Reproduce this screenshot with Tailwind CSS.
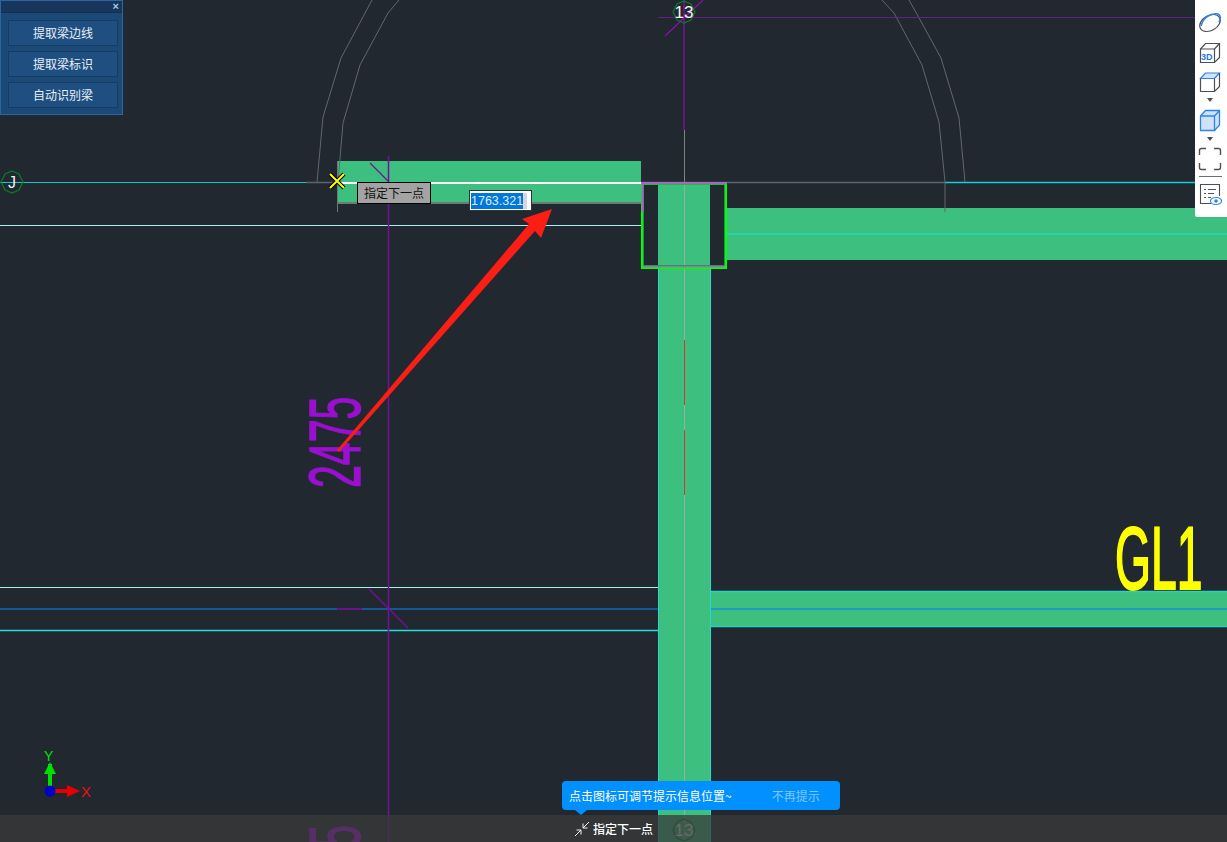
<!DOCTYPE html>
<html lang="zh-CN">
<head>
    <meta charset="UTF-8">
    <meta name="viewport" content="width=device-width, initial-scale=1.0">
    <title>提取梁边线</title>
    <script src="https://cdn.jsdelivr.net/npm/@tailwindcss/browser@4"></script>
</head>
<body class="bg-[#212830] font-['Liberation_Sans','Noto_Sans_CJK_SC',sans-serif] overflow-hidden">
<div class="relative w-[1227px] h-[842px] overflow-hidden">

    <!-- cad canvas -->
    <svg class="absolute inset-0" width="1227" height="842" viewBox="0 0 1227 842" fill="none">
        <!-- beams -->
        <rect x="338" y="161" width="303" height="42" fill="#3dc07f"/>
        <rect x="727" y="208" width="500" height="52" fill="#3dc07f"/>
        <rect x="710" y="591" width="517" height="36" fill="#3dc07f"/>
        <rect x="658" y="183" width="52" height="659" fill="#3dc07f"/>

        <!-- grid lines -->
        <path d="M0 225.500H641" stroke="#a8eeee"/>
        <path d="M0 587.500H658" stroke="#a8eeee"/>
        <path d="M0 630.500H658" stroke="#22e0e0" stroke-width="1.500"/>
        <path d="M0 609H658" stroke="#14569a" stroke-width="2"/>
        <path d="M710 609H1227" stroke="#1e9ac6" stroke-width="2"/>
        <path d="M337 609H362" stroke="#6a1190" stroke-width="2"/>
        <path d="M710 591.500H1227M710 626.500H1227" stroke="#25d3c0" stroke-width="1.300"/>
        <path d="M727 234H1227" stroke="#25d8b8" stroke-width="1.500"/>
        <path d="M0 182.500H306" stroke="#12c8d2" stroke-width="1"/>
        <path d="M306 182.500H337M641 182.500H945" stroke="#5f6468" stroke-width="1.500"/>
        <path d="M945 182.500H1227" stroke="#12d0da" stroke-width="1.500"/>
        <path d="M337 183H641" stroke="#ffffff" stroke-width="2"/>
        <path d="M337.500 161V212" stroke="#6d7a74"/>
        <path d="M338 203H641" stroke="#6b7b74" stroke-width="2"/>

        <!-- arcs -->
        <path d="M372 0L341 58L323 117L317 182" stroke="#62676b"/>
        <path d="M399 0L388 13L360 65L343 123L338 182" stroke="#62676b"/>
        <path d="M909 0L918 16L941 58L959 118L965 182" stroke="#62676b"/>
        <path d="M882 0L894 13L922 65L939 122L945 182V212" stroke="#62676b"/>

        <!-- axis marks -->
        <path d="M658 17.500H1195" stroke="#6a1b8a"/>
        <path d="M388.500 156V842" stroke="#76109c" stroke-width="1.500"/>
        <path d="M370 163L388 181M369 589L408 628" stroke="#76109c" stroke-width="1.200"/>
        <path d="M684 0V130M665 36L703 0" stroke="#8a12a8" stroke-width="1.200"/>
        <path d="M684.500 130V183" stroke="#7d8285"/>
        <path d="M684.500 183V842" stroke="#8fb3a0"/>
        <path d="M684.500 340V405M684.500 430V495" stroke="#e0352b"/>
        <path d="M658.500 268V842M710.500 268V842" stroke="#20dcd0"/>

        <!-- column box -->
        <rect x="644" y="185" width="14" height="81" fill="#212830"/>
        <rect x="710" y="185" width="14" height="81" fill="#212830"/>
        <rect x="643.500" y="184.500" width="81" height="81" stroke="#2f8a50"/>
        <rect x="642" y="183.500" width="84" height="84.500" stroke="#00ff00" stroke-width="2"/>
        <path d="M641 183H727M642.500 183V212" stroke="#a865c9" stroke-width="2"/>
        <path d="M643 266.500H725" stroke="#a865c9" stroke-width="1.500"/>

        <!-- grid bubbles -->
        <polygon points="12,171 19,174 23,182 19,190 12,193 5,190 1,182 5,174" stroke="#0d7a2e" stroke-width="1.200"/>
        <text x="12" y="188" text-anchor="middle" font-size="16" fill="#f2f2f2" font-family="Liberation Sans">J</text>
        <polygon points="684,1 691,4 695,12 691,20 684,23 677,20 673,12 677,4" stroke="#0d7a2e" stroke-width="1.200"/>
        <text x="684" y="18" text-anchor="middle" font-size="17" fill="#f2f2f2" font-family="Liberation Sans">13</text>
        <polygon points="684,819 691,822 695,830 691,838 684,841 677,838 673,830 677,822" stroke="#0d7a2e" stroke-width="1.200"/>
        <text x="684" y="836" text-anchor="middle" font-size="17" fill="#f2f2f2" font-family="Liberation Sans">13</text>

        <!-- dimension + label text -->
        <text transform="translate(360 488) rotate(-90) scale(0.57 1)" font-size="72" fill="#9a0fd0" stroke="#9a0fd0" stroke-width="1.500" font-family="Liberation Sans">2475</text>
        <text transform="translate(360 848) rotate(-90) scale(0.57 1)" font-size="72" fill="#b010f0" stroke="#b010f0" stroke-width="1.500" font-family="Liberation Sans">5</text>
        <text transform="translate(1115 589) scale(0.52 1)" font-size="89" fill="#ffff00" stroke="#ffff00" stroke-width="2" font-family="Liberation Sans">GL1</text>

        <!-- red arrow -->
        <polygon points="337,450 529,224 522,219 552,209 541,238 535,231 339,452" fill="#fa1e14"/>

        <!-- cursor -->
        <path d="M330 174L344 188M344 174L330 188" stroke="#000000" stroke-width="4"/>
        <path d="M330 174L344 188M344 174L330 188" stroke="#ffff00" stroke-width="2"/>

        <!-- ucs -->
        <path d="M50 790V764" stroke="#00e000" stroke-width="4"/>
        <polygon points="50,762 44,774 56,774" fill="#00e000"/>
        <path d="M50 791H72" stroke="#e80000" stroke-width="4"/>
        <polygon points="80,791 67,785 67,797" fill="#e80000"/>
        <circle cx="50" cy="791" r="5.500" fill="#0000c8"/>
        <text x="44" y="761" font-size="14" fill="#00e000" font-family="Liberation Sans">Y</text>
        <text x="81" y="797" font-size="15" fill="#e81010" font-family="Liberation Sans">X</text>
    </svg>

    <!-- beam tools panel -->
    <div class="absolute left-0 top-0 w-[123px] h-[115px] bg-[#1b4a78] border border-[#2a66a0] flex flex-col">
        <div class="h-[12px] bg-[#17375a] border-b border-[#12304e] flex items-center justify-end pr-[3px]">
            <span class="text-[#a9c8e8] text-[11px] font-bold leading-none">×</span>
        </div>
        <div class="flex flex-col gap-[5px] pt-[7px] pl-[7px]">
            <button class="w-[110px] h-[26px] bg-[#1f4f80] border border-[#173c60] text-[#e8f0f8] text-[12px] font-['Noto_Sans_CJK_SC',sans-serif]">提取梁边线</button>
            <button class="w-[110px] h-[26px] bg-[#1f4f80] border border-[#173c60] text-[#e8f0f8] text-[12px] font-['Noto_Sans_CJK_SC',sans-serif]">提取梁标识</button>
            <button class="w-[110px] h-[26px] bg-[#1f4f80] border border-[#173c60] text-[#e8f0f8] text-[12px] font-['Noto_Sans_CJK_SC',sans-serif]">自动识别梁</button>
        </div>
    </div>

    <!-- view toolbar -->
    <div class="absolute right-0 top-0 w-[32px] h-[217px] bg-white rounded-bl-[2px] flex flex-col items-center pt-[12px] pr-[2px]">
        <svg width="24" height="22" viewBox="0 0 24 22" fill="none">
            <ellipse cx="12" cy="11" rx="11" ry="7.500" transform="rotate(-30 12 11)" stroke="#4a5058" stroke-width="1.200"/>
            <path d="M3 14C5 6 12 1 20 2C23 3 23 7 21 10" stroke="#2b84ea" stroke-width="1.500"/>
        </svg>
        <svg class="mt-[8px]" width="22" height="22" viewBox="0 0 22 22" fill="none">
            <path d="M1.500 7L6.500 1.500H20.500V15.500L15.500 20.500H1.500ZM1.500 7H15.500V20.500M15.500 7L20.500 1.500" stroke="#4a5058" stroke-width="1.200"/>
            <text x="2" y="18" font-size="9" font-weight="700" fill="#1e78e0" font-family="Liberation Sans">3D</text>
        </svg>
        <svg class="mt-[7px]" width="22" height="22" viewBox="0 0 22 22" fill="none">
            <path d="M1.500 7.500L6.500 2H20.500L15.500 7.500Z" fill="#cfe2fa" stroke="#2b84ea" stroke-width="1.200"/>
            <path d="M1.500 7.500V20.500H15.500L20.500 15.500V2M15.500 7.500V20.500" stroke="#4a5058" stroke-width="1.200"/>
        </svg>
        <div class="mt-[5px] w-0 h-0 border-x-[3.500px] border-x-transparent border-t-[4px] border-t-[#4a5058]"></div>
        <svg class="mt-[6px]" width="22" height="24" viewBox="0 0 22 24" fill="none">
            <path d="M1.500 8L6.500 2.500H20.500V17L15.500 22.500H1.500Z" fill="#cfe2fa" stroke="#2b84ea" stroke-width="1.300"/>
            <path d="M1.500 8H15.500V22.500M15.500 8L20.500 2.500" stroke="#2b84ea" stroke-width="1.300"/>
        </svg>
        <div class="mt-[5px] w-0 h-0 border-x-[3.500px] border-x-transparent border-t-[4px] border-t-[#4a5058]"></div>
        <svg class="mt-[6px]" width="24" height="24" viewBox="0 0 24 24" fill="none">
            <path d="M1.500 8V3.500Q1.500 1.500 3.500 1.500H8M16 1.500H20.500Q22.500 1.500 22.500 3.500V8M22.500 16V20.500Q22.500 22.500 20.500 22.500H16M8 22.500H3.500Q1.500 22.500 1.500 20.500V16" stroke="#4a5058" stroke-width="1.400"/>
        </svg>
        <div class="mt-[5px] w-[23px] h-px bg-[#6a6f75]"></div>
        <svg class="mt-[6px]" width="23" height="23" viewBox="0 0 23 23" fill="none">
            <path d="M12 20.500H1.500V1.500H20.500V13" stroke="#4a5058" stroke-width="1.100"/>
            <path d="M5 6.500H7M9 6.500H17M5 10.500H7M9 10.500H15M5 14.500H7M9 14.500H12" stroke="#4a5058"/>
            <ellipse cx="17" cy="18" rx="5.500" ry="3.500" stroke="#2b84ea" stroke-width="1.200"/>
            <circle cx="17" cy="18" r="1.800" fill="#2b84ea"/>
        </svg>
    </div>

    <!-- cursor prompt -->
    <div class="absolute left-[357px] top-[182px] w-[74px] h-[22px] bg-[#a3a3a3] border border-black flex items-center justify-center text-[#111] text-[12px] font-['Noto_Sans_CJK_SC',sans-serif]">指定下一点</div>

    <!-- dynamic input -->
    <div class="absolute left-[469px] top-[190px] w-[63px] h-[21px] bg-white border border-black/80 flex items-center pl-px">
        <span class="bg-[#0078d7] text-[#dcecff] text-[12.500px] leading-[16px] font-['Liberation_Sans',sans-serif]">1763.321</span>
        <span class="w-[4px] h-[16px] bg-[#d4d8dc]"></span>
    </div>

    <!-- bottom prompt -->
    <div class="absolute left-0 bottom-0 w-full h-[27px] bg-[#3a3a3a]/75 flex items-center pl-[574px]">
        <svg width="16" height="16" viewBox="0 0 16 16" fill="none" stroke="#f2f2f2" stroke-width="1">
            <path d="M15 1L9 7M9 2.500V7H13.500M1 15L7 9M2.500 9H7V13.500"/>
        </svg>
        <span class="ml-[3px] text-white text-[12px] font-medium font-['Noto_Sans_CJK_SC',sans-serif]">指定下一点</span>
    </div>

    <!-- hint bubble -->
    <div class="absolute left-[562px] top-[781px] w-[278px] h-[29px] bg-[#0090ff] rounded-[4px] flex items-center pl-[7px] text-[12px] font-['Noto_Sans_CJK_SC',sans-serif]">
        <span class="text-white">点击图标可调节提示信息位置~</span>
        <span class="ml-[40px] text-white/50">不再提示</span>
        <div class="absolute left-[13px] top-[29px] w-0 h-0 border-x-[6px] border-x-transparent border-t-[5px] border-t-[#0090ff]"></div>
    </div>
</div>
</body>
</html>
